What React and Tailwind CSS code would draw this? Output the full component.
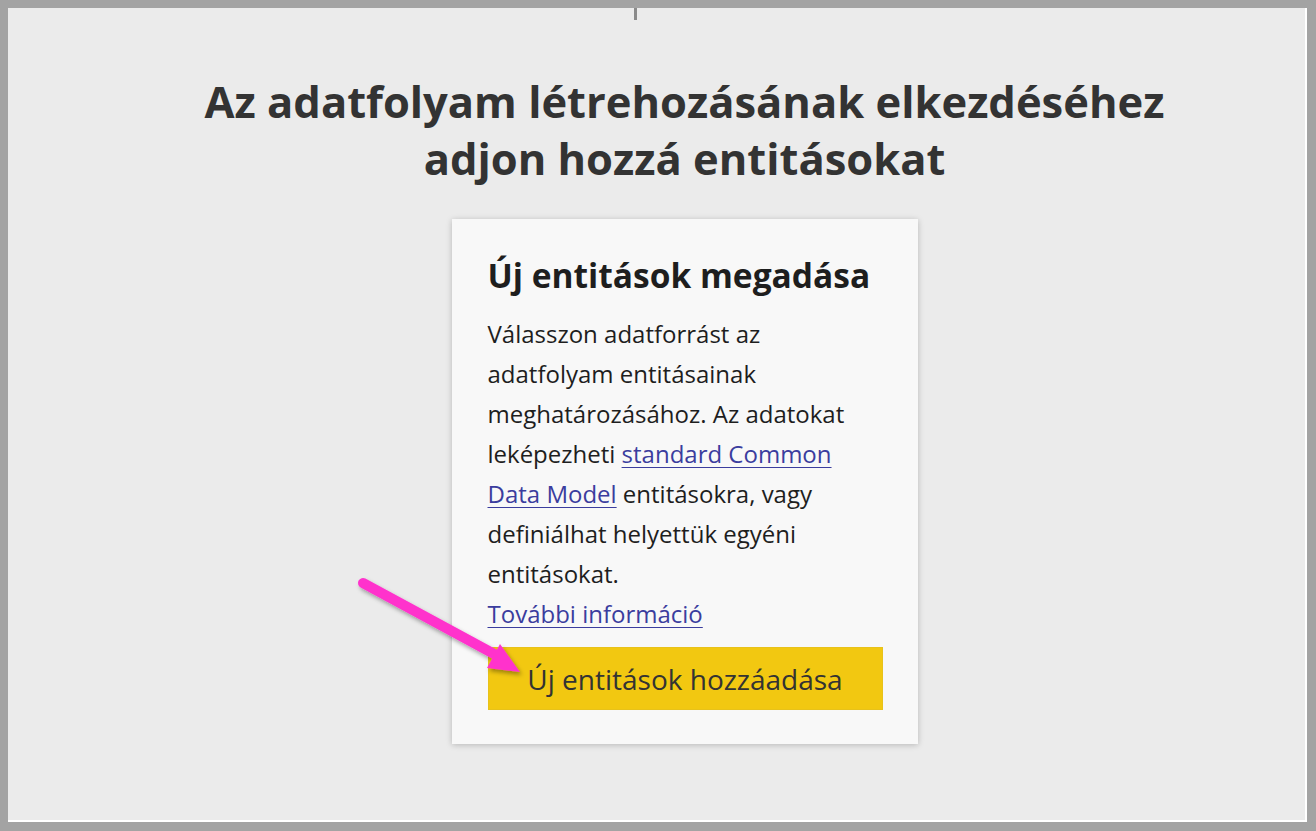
import React from "react";

const font = { fontFamily: '"Open Sans", "Noto Sans", sans-serif' };

const Arrow = () => (
    <svg
        className="absolute left-[340px] top-[560px] pointer-events-none"
        width="200"
        height="130"
        viewBox="0 0 200 130"
    >
        <defs>
            <filter id="sh" x="-20%" y="-20%" width="140%" height="140%">
                <feDropShadow dx="2" dy="3" stdDeviation="2" floodColor="#000" floodOpacity="0.35" />
            </filter>
        </defs>
        <g filter="url(#sh)">
            <line x1="15" y1="15" x2="148" y2="87" stroke="#ff33cc" strokeWidth="10" strokeLinecap="round" />
            <polygon points="172,104 139,100 152,76" fill="#ff33cc" />
        </g>
    </svg>
);

export default function App() {
    return (
        <div className="w-[1316px] h-[831px] bg-[#a3a3a3] pt-[8px] pl-[8px] pr-[9px] pb-[9px]" style={font}>
            <div className="relative w-full h-full bg-white pr-[2px] pb-[2px]">
                <div className="relative w-full h-full bg-[#ebebeb] flex flex-col items-center pl-[56px]">
                    {/* small tick at top */}
                    <div className="absolute left-[626px] top-0 w-[3px] h-[12px] bg-[#8a8a8a]" />

                    <h1 className="mt-[65px] text-center text-[43.5px] leading-[57px] font-bold text-[#333333] whitespace-nowrap">
                        Az adatfolyam létrehozásának elkezdéséhez
                        <br />
                        adjon hozzá entitásokat
                    </h1>

                    <div className="mt-[32px] w-[466px] bg-[#f8f8f8] shadow-[0_1px_6px_rgba(0,0,0,0.22)] pl-[36px] pr-[30px] pt-[36px] pb-[34px]">
                        <h2 className="text-[33.5px] leading-[40px] font-bold text-[#1e1e1e] whitespace-nowrap">
                            Új entitások megadása
                        </h2>
                        <p className="mt-[19px] w-[366px] text-[24px] leading-[40px] text-[#1e1e1e]">
                            Válasszon adatforrást az adatfolyam entitásainak meghatározásához. Az adatokat
                            leképezheti{" "}
                            <a className="text-[#3b3d9e] underline underline-offset-[4px] decoration-1">
                                standard Common Data Model
                            </a>{" "}
                            entitásokra, vagy definiálhat helyettük egyéni entitásokat.
                            <br />
                            <a className="text-[#3b3d9e] underline underline-offset-[4px] decoration-1">
                                További információ
                            </a>
                        </p>
                        <button className="mt-[13px] w-[395px] h-[63px] bg-[#f2c811] text-[28px] text-[#333333] border border-[#e8c21a]">
                            Új entitások hozzáadása
                        </button>
                    </div>

                    <Arrow />
                </div>
            </div>
        </div>
    );
}
